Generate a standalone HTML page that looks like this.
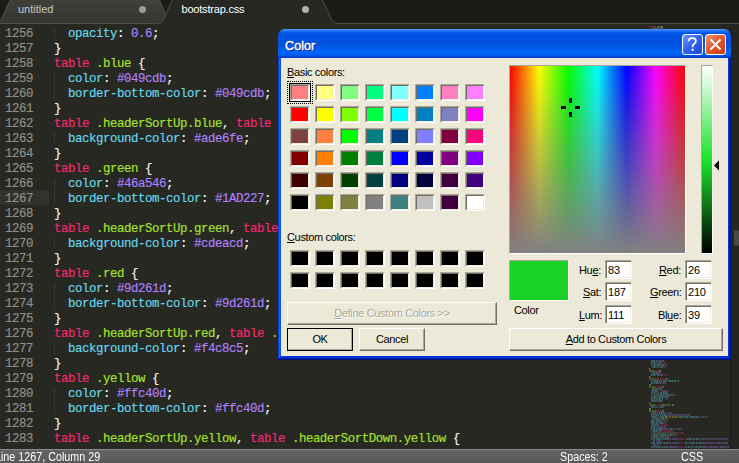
<!DOCTYPE html>
<html><head><meta charset="utf-8">
<style>
*{margin:0;padding:0;box-sizing:border-box}
html,body{width:739px;height:463px;overflow:hidden}
body{position:relative;background:#272822;font-family:"Liberation Sans",sans-serif}
.abs{position:absolute}
#tabbar{position:absolute;left:0;top:0;width:739px;height:24px}
.ln,.gn{position:absolute;height:15px;line-height:15px;font-family:"Liberation Mono",monospace;font-size:12.4px;letter-spacing:-0.44px;white-space:pre;color:#F8F8F2;-webkit-text-stroke:0.15px currentColor}
.ln{left:54px}
.gn{left:0;width:33px;text-align:right;color:#8F908A}
.k{color:#F92672}.c{color:#A6E22E}.p{color:#66D9EF}.v{color:#AE81FF}
.guide{position:absolute;left:54px;width:1px;background:repeating-linear-gradient(180deg,#4a4a44 0 1px,transparent 1px 2px)}
#curline{position:absolute;left:0;top:190px;width:49px;height:15px;background:#32332d}
#status{position:absolute;left:0;top:449px;width:739px;height:14px;background:linear-gradient(180deg,#636363,#595959);border-top:1px solid #8a8a8a;color:#ffffff;font-size:12.5px}
#status span{position:absolute;top:1px;line-height:13px;transform:scaleX(0.86);transform-origin:0 0}
#vscroll{position:absolute;left:730px;top:24px;width:9px;height:425px;background:#242420;border-left:1px dotted #121210}
#thumb{position:absolute;left:734px;top:230px;width:5px;height:16px;background:#4a4a46;border-radius:2px}

/* dialog */
#dlg{position:absolute;left:278px;top:29px;width:453px;height:29px;border-radius:7px 7px 0 0;
 background:linear-gradient(180deg,#4a9bff 0px,#1e6ff5 2px,#0056e8 4px,#0050dc 12px,#0055e2 17px,#0062f6 22px,#0064fa 25px,#0050e0 27px,#0036b8 29px);}
#frame{position:absolute;left:278px;top:58px;width:453px;height:302px;background:#0831d9;
 box-shadow:inset -1px -1px #00138c, inset 1px 0 #0831d9, inset -2px -2px #001ea0, inset 2px 0 #166aee, inset -3px -3px #003bda, inset 3px 0 #0855dd}
#client{position:absolute;left:281px;top:58px;width:447px;height:298px;background:#ECE9D8}
#title{position:absolute;left:285px;top:38px;color:#fff;font-weight:normal;-webkit-text-stroke:0.45px #fff;font-size:12.5px;letter-spacing:0.1px;line-height:16px;text-shadow:1px 1px #0f1089}
.tbtn{position:absolute;top:34px;width:21px;height:21px;border:1px solid #fff;border-radius:3px}
#help{left:682px;background:linear-gradient(135deg,#6a95fa,#3467ec 45%,#2355e4 75%,#1e4cd8)}
#close{left:705px;background:linear-gradient(135deg,#f09070,#e45a30 45%,#d8481e 75%,#c83c16)}
.lbl{position:absolute;font-size:11px;line-height:13px;color:#000;white-space:nowrap;letter-spacing:-0.35px}
.u{text-decoration:underline;text-underline-offset:1px}
.sw{position:absolute;width:20px;height:17px;border:1px solid;border-color:#ACA899 #fff #fff #ACA899}
.sw div{width:18px;height:15px;border:1px solid;border-color:#716F64 #F1EFE2 #F1EFE2 #716F64}
.btn{position:absolute;height:23px;background:#ECE9D8;border:1px solid;border-color:#fff #716F64 #716F64 #fff;box-shadow:inset -1px -1px #ACA899;font-size:11px;text-align:center;line-height:21px;color:#000;letter-spacing:-0.35px}
.edit{position:absolute;width:27px;height:19px;background:#fff;border:1px solid;border-color:#ACA899 #fff #fff #ACA899;box-shadow:inset 1px 1px #716F64, inset -1px -1px #F1EFE2;font-size:11px;line-height:15px;padding-left:2px;padding-top:2px;letter-spacing:-0.2px}
#spec{position:absolute;left:509px;top:65px;width:177px;height:189px;border:1px solid;border-color:#ACA899 #fff #fff #ACA899;
 background:linear-gradient(180deg,rgba(128,128,128,0) 0%,rgba(128,128,128,1) 100%),linear-gradient(90deg,#f00 0%,#ff0 16.67%,#0f0 33.33%,#0ff 50%,#00f 66.67%,#f0f 83.33%,#f00 100%);background-clip:padding-box}
#lum{position:absolute;left:701px;top:65px;width:12px;height:189px;border:1px solid;border-color:#ACA899 #fff #fff #ACA899;
 background:linear-gradient(180deg,#fff 0%,#1CE32B 50%,#000 100%);background-clip:padding-box}
#cur{position:absolute;left:509px;top:260px;width:60px;height:41px;background:#1AD227;border:1px solid;border-color:#ACA899 #fff #fff #ACA899}
</style></head><body>
<div id="tabbar">
<svg width="739" height="24" style="position:absolute;left:0;top:0">
 <defs><linearGradient id="itab" x1="0" y1="0" x2="0" y2="1"><stop offset="0" stop-color="#41413c"/><stop offset="1" stop-color="#353531"/></linearGradient></defs>
 <rect x="0" y="0" width="739" height="24" fill="#1a1a17"/>
 <rect x="0" y="23" width="739" height="1" fill="#43433e"/>
 <path d="M-8 23.5 Q0 23.5 2.5 17 L10.5 -1 L159 -1 L165 12.5 Q167.5 18 163.5 21.5 Q161.5 23.5 157 23.5 Z" fill="url(#itab)" stroke="#51514b" stroke-width="1"/>
 <path d="M140 24.5 L157 23.5 Q161.5 23.5 163.5 20 L172.5 -1 L322 -1 L329 14 Q332.5 23.5 338 23.5 L739 23.5 L739 24.5 Z" fill="#272822" stroke="#4c4c46" stroke-width="1"/>
 <rect x="0" y="24" width="739" height="1" fill="#272822"/>
 <circle cx="142.5" cy="9.5" r="3.5" fill="#9a9a96"/>
 <circle cx="305.5" cy="9.5" r="3.5" fill="#b0b0ac"/>
 <text x="18" y="13" font-family="Liberation Sans" font-size="11" fill="#c8c8c4">untitled</text>
 <text x="181.5" y="13" font-family="Liberation Sans" font-size="11" letter-spacing="-0.2" fill="#ffffff">bootstrap.css</text>
</svg>
</div>
<div id="curline"></div>
<div class="guide" style="top:29px;height:10px"></div><div class="guide" style="top:73px;height:26px"></div><div class="guide" style="top:133px;height:11px"></div><div class="guide" style="top:179px;height:25px"></div><div class="guide" style="top:239px;height:10px"></div><div class="guide" style="top:283px;height:26px"></div><div class="guide" style="top:343px;height:11px"></div><div class="guide" style="top:389px;height:25px"></div>
<div class="gn" style="top:27px">1256</div>
<div class="gn" style="top:42px">1257</div>
<div class="gn" style="top:57px">1258</div>
<div class="gn" style="top:72px">1259</div>
<div class="gn" style="top:87px">1260</div>
<div class="gn" style="top:102px">1261</div>
<div class="gn" style="top:117px">1262</div>
<div class="gn" style="top:132px">1263</div>
<div class="gn" style="top:147px">1264</div>
<div class="gn" style="top:162px">1265</div>
<div class="gn" style="top:177px">1266</div>
<div class="gn" style="top:192px">1267</div>
<div class="gn" style="top:207px">1268</div>
<div class="gn" style="top:222px">1269</div>
<div class="gn" style="top:237px">1270</div>
<div class="gn" style="top:252px">1271</div>
<div class="gn" style="top:267px">1272</div>
<div class="gn" style="top:282px">1273</div>
<div class="gn" style="top:297px">1274</div>
<div class="gn" style="top:312px">1275</div>
<div class="gn" style="top:327px">1276</div>
<div class="gn" style="top:342px">1277</div>
<div class="gn" style="top:357px">1278</div>
<div class="gn" style="top:372px">1279</div>
<div class="gn" style="top:387px">1280</div>
<div class="gn" style="top:402px">1281</div>
<div class="gn" style="top:417px">1282</div>
<div class="gn" style="top:432px">1283</div>
<div class="ln" style="top:27px">  <span class="p">opacity</span>: <span class="v">0.6</span>;</div>
<div class="ln" style="top:42px">}</div>
<div class="ln" style="top:57px"><span class="k">table</span> <span class="c">.blue</span> {</div>
<div class="ln" style="top:72px">  <span class="p">color</span>: <span class="v">#049cdb</span>;</div>
<div class="ln" style="top:87px">  <span class="p">border-bottom-color</span>: <span class="v">#049cdb</span>;</div>
<div class="ln" style="top:102px">}</div>
<div class="ln" style="top:117px"><span class="k">table</span> <span class="c">.headerSortUp.blue</span>, <span class="k">table</span> <span class="c">.headerSortDown.blue</span> {</div>
<div class="ln" style="top:132px">  <span class="p">background-color</span>: <span class="v">#ade6fe</span>;</div>
<div class="ln" style="top:147px">}</div>
<div class="ln" style="top:162px"><span class="k">table</span> <span class="c">.green</span> {</div>
<div class="ln" style="top:177px">  <span class="p">color</span>: <span class="v">#46a546</span>;</div>
<div class="ln" style="top:192px">  <span class="p">border-bottom-color</span>: <span class="v">#1AD227</span>;</div>
<div class="ln" style="top:207px">}</div>
<div class="ln" style="top:222px"><span class="k">table</span> <span class="c">.headerSortUp.green</span>, <span class="k">table</span> <span class="c">.headerSortDown.green</span> {</div>
<div class="ln" style="top:237px">  <span class="p">background-color</span>: <span class="v">#cdeacd</span>;</div>
<div class="ln" style="top:252px">}</div>
<div class="ln" style="top:267px"><span class="k">table</span> <span class="c">.red</span> {</div>
<div class="ln" style="top:282px">  <span class="p">color</span>: <span class="v">#9d261d</span>;</div>
<div class="ln" style="top:297px">  <span class="p">border-bottom-color</span>: <span class="v">#9d261d</span>;</div>
<div class="ln" style="top:312px">}</div>
<div class="ln" style="top:327px"><span class="k">table</span> <span class="c">.headerSortUp.red</span>, <span class="k">table</span> <span class="c">.headerSortDown.red</span> {</div>
<div class="ln" style="top:342px">  <span class="p">background-color</span>: <span class="v">#f4c8c5</span>;</div>
<div class="ln" style="top:357px">}</div>
<div class="ln" style="top:372px"><span class="k">table</span> <span class="c">.yellow</span> {</div>
<div class="ln" style="top:387px">  <span class="p">color</span>: <span class="v">#ffc40d</span>;</div>
<div class="ln" style="top:402px">  <span class="p">border-bottom-color</span>: <span class="v">#ffc40d</span>;</div>
<div class="ln" style="top:417px">}</div>
<div class="ln" style="top:432px"><span class="k">table</span> <span class="c">.headerSortUp.yellow</span>, <span class="k">table</span> <span class="c">.headerSortDown.yellow</span> {</div>
<svg class="abs" style="left:0;top:0;opacity:0.45" width="739" height="463"><line x1="649" y1="27" x2="655" y2="27" stroke="#F92672" stroke-width="1.3" stroke-dasharray="1.6 0.5 2.0 0.3 0.8 0.3 1.6 0.3" stroke-dashoffset="1.8"/><line x1="655" y1="27" x2="662" y2="27" stroke="#A6E22E" stroke-width="1.3" stroke-dasharray="1.2 0.3 0.8 1.0 2.0 0.3 1.2 0.3" stroke-dashoffset="1.1"/><line x1="661" y1="27" x2="663" y2="27" stroke="#F8F8F2" stroke-width="1.3" stroke-dasharray="0.8 0.3 1.2 0.3 2.4 1.0 0.8 0.5" stroke-dashoffset="0.1"/><line x1="651" y1="29" x2="658" y2="29" stroke="#66D9EF" stroke-width="1.3" stroke-dasharray="1.2 0.7 2.0 0.5 2.4 0.3 2.4 0.7" stroke-dashoffset="1.1"/><line x1="658" y1="29" x2="663" y2="29" stroke="#AE81FF" stroke-width="1.3" stroke-dasharray="1.2 0.3 2.4 0.5 1.6 0.3 2.4 0.3" stroke-dashoffset="1.1"/><line x1="651" y1="361" x2="657" y2="361" stroke="#66D9EF" stroke-width="1.3" stroke-dasharray="2.4 0.5 2.0 1.0 1.6 1.0 2.4 1.0" stroke-dashoffset="0.7"/><line x1="657" y1="361" x2="665" y2="361" stroke="#AE81FF" stroke-width="1.3" stroke-dasharray="1.2 0.5 1.2 0.3 2.4 0.7 2.4 1.0" stroke-dashoffset="1.8"/><line x1="651" y1="363" x2="661" y2="363" stroke="#66D9EF" stroke-width="1.3" stroke-dasharray="2.0 0.7 2.4 0.3 0.8 1.0 1.2 0.7" stroke-dashoffset="0.3"/><line x1="661" y1="363" x2="666" y2="363" stroke="#F92672" stroke-width="1.3" stroke-dasharray="2.0 1.0 0.8 0.3 2.4 0.7 1.6 0.7" stroke-dashoffset="1.2"/><line x1="651" y1="365" x2="663" y2="365" stroke="#66D9EF" stroke-width="1.3" stroke-dasharray="2.4 1.0 0.8 0.3 1.6 1.0 0.8 0.3" stroke-dashoffset="1.5"/><line x1="663" y1="365" x2="667" y2="365" stroke="#AE81FF" stroke-width="1.3" stroke-dasharray="1.6 1.0 1.6 1.0 1.6 0.3 2.0 0.7" stroke-dashoffset="0.3"/><line x1="651" y1="367" x2="663" y2="367" stroke="#66D9EF" stroke-width="1.3" stroke-dasharray="0.8 1.0 0.8 0.5 1.6 0.5 1.2 1.0" stroke-dashoffset="0.8"/><line x1="663" y1="367" x2="666" y2="367" stroke="#AE81FF" stroke-width="1.3" stroke-dasharray="2.0 0.3 1.2 1.0 2.0 0.7 1.2 1.0" stroke-dashoffset="1.7"/><line x1="649" y1="369" x2="651" y2="369" stroke="#F8F8F2" stroke-width="1.3" stroke-dasharray="1.6 1.0 1.6 1.0 1.2 0.5 0.8 0.5" stroke-dashoffset="0.3"/><line x1="649" y1="371" x2="656" y2="371" stroke="#A6E22E" stroke-width="1.3" stroke-dasharray="1.2 0.3 2.0 0.5 1.6 0.7 0.8 0.5" stroke-dashoffset="0.8"/><line x1="656" y1="371" x2="659" y2="371" stroke="#F92672" stroke-width="1.3" stroke-dasharray="1.6 0.7 1.2 0.3 2.0 1.0 2.0 1.0" stroke-dashoffset="0.8"/><line x1="659" y1="371" x2="661" y2="371" stroke="#F8F8F2" stroke-width="1.3" stroke-dasharray="2.0 1.0 0.8 0.5 0.8 0.5 2.0 0.5" stroke-dashoffset="0.2"/><line x1="651" y1="373" x2="658" y2="373" stroke="#66D9EF" stroke-width="1.3" stroke-dasharray="2.4 0.3 0.8 0.3 2.4 0.5 2.4 0.3" stroke-dashoffset="1.9"/><line x1="658" y1="373" x2="661" y2="373" stroke="#AE81FF" stroke-width="1.3" stroke-dasharray="2.4 0.3 0.8 0.5 2.4 1.0 1.2 0.7" stroke-dashoffset="1.9"/><line x1="651" y1="375" x2="663" y2="375" stroke="#66D9EF" stroke-width="1.3" stroke-dasharray="2.4 0.7 2.0 0.3 0.8 1.0 2.0 1.0" stroke-dashoffset="1.0"/><line x1="663" y1="375" x2="668" y2="375" stroke="#F92672" stroke-width="1.3" stroke-dasharray="0.8 0.5 0.8 0.7 1.6 1.0 1.2 0.3" stroke-dashoffset="0.4"/><line x1="649" y1="377" x2="651" y2="377" stroke="#F8F8F2" stroke-width="1.3" stroke-dasharray="2.4 0.7 1.2 0.3 2.4 0.7 0.8 0.7" stroke-dashoffset="1.0"/><line x1="649" y1="379" x2="656" y2="379" stroke="#A6E22E" stroke-width="1.3" stroke-dasharray="1.2 0.7 1.2 0.7 1.2 0.5 1.2 1.0" stroke-dashoffset="1.5"/><line x1="656" y1="379" x2="666" y2="379" stroke="#F92672" stroke-width="1.3" stroke-dasharray="1.2 0.5 2.4 1.0 1.6 0.3 0.8 0.7" stroke-dashoffset="0.9"/><line x1="666" y1="379" x2="668" y2="379" stroke="#F8F8F2" stroke-width="1.3" stroke-dasharray="1.2 0.7 2.0 0.7 1.6 0.3 1.2 0.3" stroke-dashoffset="0.5"/><line x1="651" y1="381" x2="667" y2="381" stroke="#66D9EF" stroke-width="1.3" stroke-dasharray="1.2 0.7 1.2 1.0 2.4 0.3 2.0 0.7" stroke-dashoffset="1.6"/><line x1="668" y1="381" x2="679" y2="381" stroke="#66D9EF" stroke-width="1.3" stroke-dasharray="0.8 0.3 2.0 0.5 2.0 0.5 2.0 0.7" stroke-dashoffset="0.2"/><line x1="651" y1="383" x2="657" y2="383" stroke="#66D9EF" stroke-width="1.3" stroke-dasharray="2.0 1.0 2.0 0.3 1.2 0.5 1.2 0.3" stroke-dashoffset="0.3"/><line x1="657" y1="383" x2="666" y2="383" stroke="#AE81FF" stroke-width="1.3" stroke-dasharray="2.0 0.5 2.4 1.0 1.6 0.5 2.4 0.5" stroke-dashoffset="0.0"/><line x1="649" y1="385" x2="651" y2="385" stroke="#F8F8F2" stroke-width="1.3" stroke-dasharray="0.8 0.5 2.0 0.5 1.2 0.3 1.6 0.5" stroke-dashoffset="0.6"/><line x1="649" y1="387" x2="656" y2="387" stroke="#A6E22E" stroke-width="1.3" stroke-dasharray="1.2 0.7 1.6 1.0 1.2 0.3 1.6 1.0" stroke-dashoffset="1.3"/><line x1="656" y1="387" x2="662" y2="387" stroke="#F92672" stroke-width="1.3" stroke-dasharray="2.4 1.0 2.4 0.5 2.4 0.5 2.4 0.3" stroke-dashoffset="1.7"/><line x1="662" y1="387" x2="664" y2="387" stroke="#F8F8F2" stroke-width="1.3" stroke-dasharray="1.2 0.3 1.2 0.5 1.2 1.0 2.4 0.3" stroke-dashoffset="1.1"/><line x1="651" y1="389" x2="657" y2="389" stroke="#66D9EF" stroke-width="1.3" stroke-dasharray="1.6 1.0 0.8 0.3 1.2 0.5 1.6 0.3" stroke-dashoffset="1.5"/><line x1="657" y1="389" x2="662" y2="389" stroke="#66D9EF" stroke-width="1.3" stroke-dasharray="2.4 1.0 2.4 0.3 0.8 1.0 1.6 0.5" stroke-dashoffset="1.4"/><line x1="651" y1="391" x2="658" y2="391" stroke="#66D9EF" stroke-width="1.3" stroke-dasharray="2.0 1.0 2.4 0.5 2.4 0.7 2.4 0.5" stroke-dashoffset="1.7"/><line x1="658" y1="391" x2="662" y2="391" stroke="#F92672" stroke-width="1.3" stroke-dasharray="1.2 1.0 0.8 1.0 2.0 0.7 0.8 0.5" stroke-dashoffset="0.9"/><line x1="662" y1="391" x2="668" y2="391" stroke="#AE81FF" stroke-width="1.3" stroke-dasharray="1.2 0.7 0.8 0.5 1.6 0.5 1.6 0.5" stroke-dashoffset="1.9"/><line x1="651" y1="393" x2="659" y2="393" stroke="#66D9EF" stroke-width="1.3" stroke-dasharray="1.2 0.3 2.0 1.0 1.2 0.5 1.2 1.0" stroke-dashoffset="2.0"/><line x1="660" y1="393" x2="668" y2="393" stroke="#66D9EF" stroke-width="1.3" stroke-dasharray="2.0 0.7 2.0 0.5 1.6 0.7 0.8 0.7" stroke-dashoffset="0.0"/><line x1="651" y1="395" x2="658" y2="395" stroke="#8a8a70" stroke-width="1.3" stroke-dasharray="2.4 1.0 2.0 0.3 2.0 0.7 2.4 0.7" stroke-dashoffset="1.0"/><line x1="658" y1="395" x2="673" y2="395" stroke="#66D9EF" stroke-width="1.3" stroke-dasharray="0.8 0.3 1.2 0.3 0.8 0.7 1.6 0.3" stroke-dashoffset="1.8"/><line x1="673" y1="395" x2="676" y2="395" stroke="#AE81FF" stroke-width="1.3" stroke-dasharray="1.2 0.7 1.2 1.0 1.6 1.0 1.2 1.0" stroke-dashoffset="1.4"/><line x1="651" y1="397" x2="666" y2="397" stroke="#66D9EF" stroke-width="1.3" stroke-dasharray="0.8 0.7 0.8 0.5 2.0 0.3 1.6 0.3" stroke-dashoffset="1.3"/><line x1="666" y1="397" x2="669" y2="397" stroke="#AE81FF" stroke-width="1.3" stroke-dasharray="1.6 0.3 2.4 0.5 0.8 0.7 0.8 1.0" stroke-dashoffset="0.0"/><line x1="651" y1="399" x2="663" y2="399" stroke="#66D9EF" stroke-width="1.3" stroke-dasharray="2.4 1.0 1.6 0.5 0.8 0.5 0.8 0.5" stroke-dashoffset="0.5"/><line x1="665" y1="399" x2="667" y2="399" stroke="#AE81FF" stroke-width="1.3" stroke-dasharray="1.2 0.5 1.6 0.7 2.4 0.5 1.6 1.0" stroke-dashoffset="1.0"/><line x1="651" y1="401" x2="661" y2="401" stroke="#66D9EF" stroke-width="1.3" stroke-dasharray="1.2 0.7 1.6 0.3 1.6 0.3 0.8 0.3" stroke-dashoffset="1.5"/><line x1="661" y1="401" x2="663" y2="401" stroke="#AE81FF" stroke-width="1.3" stroke-dasharray="2.4 0.5 2.4 1.0 1.2 1.0 0.8 1.0" stroke-dashoffset="1.3"/><line x1="649" y1="403" x2="651" y2="403" stroke="#F8F8F2" stroke-width="1.3" stroke-dasharray="2.4 1.0 2.4 0.7 1.2 0.5 1.6 0.5" stroke-dashoffset="1.7"/><line x1="649" y1="405" x2="656" y2="405" stroke="#A6E22E" stroke-width="1.3" stroke-dasharray="1.2 1.0 1.6 0.3 1.2 0.3 0.8 0.7" stroke-dashoffset="0.9"/><line x1="657" y1="405" x2="661" y2="405" stroke="#F92672" stroke-width="1.3" stroke-dasharray="0.8 0.3 2.0 0.7 2.4 0.5 1.6 0.3" stroke-dashoffset="0.9"/><line x1="661" y1="405" x2="671" y2="405" stroke="#A6E22E" stroke-width="1.3" stroke-dasharray="1.2 0.7 2.0 0.3 1.6 0.7 1.6 0.7" stroke-dashoffset="0.5"/><line x1="672" y1="405" x2="674" y2="405" stroke="#F8F8F2" stroke-width="1.3" stroke-dasharray="1.6 0.5 1.6 0.5 0.8 0.7 2.0 0.3" stroke-dashoffset="0.9"/><line x1="651" y1="407" x2="657" y2="407" stroke="#66D9EF" stroke-width="1.3" stroke-dasharray="2.4 0.5 1.2 0.3 0.8 0.7 0.8 0.5" stroke-dashoffset="0.8"/><line x1="658" y1="407" x2="664" y2="407" stroke="#66D9EF" stroke-width="1.3" stroke-dasharray="0.8 1.0 0.8 0.7 1.6 0.5 0.8 0.5" stroke-dashoffset="1.3"/><line x1="649" y1="409" x2="651" y2="409" stroke="#F8F8F2" stroke-width="1.3" stroke-dasharray="2.4 1.0 1.6 1.0 1.2 0.7 2.4 0.5" stroke-dashoffset="0.1"/><line x1="649" y1="411" x2="656" y2="411" stroke="#A6E22E" stroke-width="1.3" stroke-dasharray="2.4 1.0 2.4 0.5 2.4 0.3 2.4 0.5" stroke-dashoffset="0.2"/><line x1="656" y1="411" x2="662" y2="411" stroke="#F92672" stroke-width="1.3" stroke-dasharray="0.8 0.5 1.6 0.3 2.0 1.0 2.4 0.3" stroke-dashoffset="1.3"/><line x1="662" y1="411" x2="664" y2="411" stroke="#F8F8F2" stroke-width="1.3" stroke-dasharray="2.4 0.5 2.0 0.7 0.8 1.0 0.8 0.3" stroke-dashoffset="1.3"/><line x1="651" y1="413" x2="667" y2="413" stroke="#66D9EF" stroke-width="1.3" stroke-dasharray="0.8 1.0 1.6 0.3 1.6 0.5 1.2 0.5" stroke-dashoffset="1.5"/><line x1="668" y1="413" x2="672" y2="413" stroke="#AE81FF" stroke-width="1.3" stroke-dasharray="2.0 1.0 2.0 0.3 2.0 0.7 0.8 0.5" stroke-dashoffset="0.2"/><line x1="651" y1="415" x2="669" y2="415" stroke="#66D9EF" stroke-width="1.3" stroke-dasharray="1.2 0.7 1.6 0.7 2.4 0.5 0.8 1.0" stroke-dashoffset="0.1"/><line x1="669" y1="415" x2="691" y2="415" stroke="#AE81FF" stroke-width="1.3" stroke-dasharray="1.6 0.3 1.2 1.0 1.6 0.7 2.0 1.0" stroke-dashoffset="0.9"/><line x1="651" y1="417" x2="666" y2="417" stroke="#66D9EF" stroke-width="1.3" stroke-dasharray="0.8 0.5 1.6 0.3 2.0 0.3 1.6 1.0" stroke-dashoffset="0.2"/><line x1="666" y1="417" x2="681" y2="417" stroke="#E6DB74" stroke-width="1.3" stroke-dasharray="2.4 1.0 1.6 1.0 1.2 0.5 0.8 0.3" stroke-dashoffset="0.3"/><line x1="681" y1="417" x2="697" y2="417" stroke="#66D9EF" stroke-width="1.3" stroke-dasharray="2.4 0.7 1.6 0.5 2.4 0.7 0.8 0.7" stroke-dashoffset="0.5"/><line x1="697" y1="417" x2="707" y2="417" stroke="#AE81FF" stroke-width="1.3" stroke-dasharray="2.0 1.0 0.8 0.5 0.8 1.0 2.0 1.0" stroke-dashoffset="0.6"/><line x1="651" y1="419" x2="663" y2="419" stroke="#66D9EF" stroke-width="1.3" stroke-dasharray="1.2 1.0 1.6 1.0 1.6 0.3 1.6 0.3" stroke-dashoffset="0.6"/><line x1="663" y1="419" x2="668" y2="419" stroke="#66D9EF" stroke-width="1.3" stroke-dasharray="1.6 1.0 0.8 0.5 0.8 0.7 1.6 0.7" stroke-dashoffset="0.1"/><line x1="651" y1="421" x2="662" y2="421" stroke="#66D9EF" stroke-width="1.3" stroke-dasharray="2.0 0.3 1.6 1.0 1.6 0.3 1.6 0.3" stroke-dashoffset="0.1"/><line x1="662" y1="421" x2="668" y2="421" stroke="#F92672" stroke-width="1.3" stroke-dasharray="1.6 0.5 1.2 0.7 2.0 0.7 1.2 0.7" stroke-dashoffset="1.6"/><line x1="651" y1="423" x2="664" y2="423" stroke="#66D9EF" stroke-width="1.3" stroke-dasharray="2.0 0.3 2.0 0.5 0.8 0.3 2.0 1.0" stroke-dashoffset="1.2"/><line x1="664" y1="423" x2="666" y2="423" stroke="#AE81FF" stroke-width="1.3" stroke-dasharray="1.2 0.7 2.0 0.3 2.4 0.5 1.2 1.0" stroke-dashoffset="0.8"/><line x1="651" y1="425" x2="660" y2="425" stroke="#66D9EF" stroke-width="1.3" stroke-dasharray="1.6 0.7 1.6 0.7 2.0 0.5 1.6 1.0" stroke-dashoffset="1.1"/><line x1="661" y1="425" x2="669" y2="425" stroke="#F92672" stroke-width="1.3" stroke-dasharray="2.0 0.3 1.2 0.5 0.8 0.5 2.4 1.0" stroke-dashoffset="1.1"/><line x1="651" y1="427" x2="658" y2="427" stroke="#66D9EF" stroke-width="1.3" stroke-dasharray="2.0 0.7 2.0 1.0 1.2 0.5 1.2 0.3" stroke-dashoffset="0.3"/><line x1="658" y1="427" x2="666" y2="427" stroke="#AE81FF" stroke-width="1.3" stroke-dasharray="2.4 0.3 1.6 0.5 1.6 0.7 2.4 0.5" stroke-dashoffset="1.8"/><line x1="651" y1="429" x2="662" y2="429" stroke="#66D9EF" stroke-width="1.3" stroke-dasharray="2.0 1.0 2.0 0.5 2.0 0.7 1.6 0.3" stroke-dashoffset="1.0"/><line x1="662" y1="429" x2="682" y2="429" stroke="#AE81FF" stroke-width="1.3" stroke-dasharray="2.4 0.7 1.2 0.5 0.8 0.7 1.2 1.0" stroke-dashoffset="0.8"/><line x1="651" y1="431" x2="662" y2="431" stroke="#66D9EF" stroke-width="1.3" stroke-dasharray="2.0 1.0 1.6 0.3 1.2 0.3 2.0 1.0" stroke-dashoffset="1.9"/><line x1="662" y1="431" x2="674" y2="431" stroke="#F92672" stroke-width="1.3" stroke-dasharray="2.0 0.3 0.8 1.0 2.4 1.0 2.0 0.5" stroke-dashoffset="1.6"/><line x1="651" y1="433" x2="678" y2="433" stroke="#8a8a70" stroke-width="1.3" stroke-dasharray="1.2 0.5 1.2 0.3 2.0 0.3 2.4 0.3" stroke-dashoffset="0.0"/><line x1="679" y1="433" x2="684" y2="433" stroke="#F92672" stroke-width="1.3" stroke-dasharray="1.2 0.5 2.4 0.3 1.6 0.5 1.6 1.0" stroke-dashoffset="1.4"/><line x1="651" y1="435" x2="674" y2="435" stroke="#66D9EF" stroke-width="1.3" stroke-dasharray="0.8 0.3 0.8 0.7 2.4 0.5 2.0 0.7" stroke-dashoffset="0.4"/><line x1="675" y1="435" x2="678" y2="435" stroke="#F92672" stroke-width="1.3" stroke-dasharray="2.4 0.3 0.8 0.7 2.0 0.7 1.6 0.5" stroke-dashoffset="1.0"/><line x1="651" y1="437" x2="668" y2="437" stroke="#66D9EF" stroke-width="1.3" stroke-dasharray="1.2 0.5 0.8 1.0 1.6 0.3 0.8 0.5" stroke-dashoffset="1.0"/><line x1="668" y1="437" x2="670" y2="437" stroke="#F92672" stroke-width="1.3" stroke-dasharray="2.0 0.3 1.6 0.5 2.0 0.7 1.2 1.0" stroke-dashoffset="0.1"/><line x1="651" y1="439" x2="670" y2="439" stroke="#66D9EF" stroke-width="1.3" stroke-dasharray="1.6 1.0 1.6 1.0 1.2 0.3 1.6 0.3" stroke-dashoffset="0.4"/><line x1="670" y1="439" x2="679" y2="439" stroke="#AE81FF" stroke-width="1.3" stroke-dasharray="1.2 0.7 1.2 0.5 2.0 0.5 1.6 0.7" stroke-dashoffset="0.2"/><line x1="679" y1="439" x2="685" y2="439" stroke="#F92672" stroke-width="1.3" stroke-dasharray="2.4 1.0 2.4 0.5 1.2 1.0 2.0 0.3" stroke-dashoffset="1.9"/><line x1="685" y1="439" x2="701" y2="439" stroke="#66D9EF" stroke-width="1.3" stroke-dasharray="1.2 1.0 0.8 0.5 0.8 0.5 2.0 0.3" stroke-dashoffset="1.4"/><line x1="701" y1="439" x2="728" y2="439" stroke="#AE81FF" stroke-width="1.3" stroke-dasharray="1.2 1.0 2.0 0.7 0.8 0.3 1.2 0.7" stroke-dashoffset="0.4"/><line x1="653" y1="441" x2="661" y2="441" stroke="#AE81FF" stroke-width="1.3" stroke-dasharray="2.4 1.0 0.8 0.7 2.0 0.7 1.6 1.0" stroke-dashoffset="0.3"/><line x1="651" y1="443" x2="670" y2="443" stroke="#66D9EF" stroke-width="1.3" stroke-dasharray="0.8 0.3 1.6 0.3 1.6 1.0 0.8 0.5" stroke-dashoffset="0.8"/><line x1="670" y1="443" x2="679" y2="443" stroke="#AE81FF" stroke-width="1.3" stroke-dasharray="1.6 1.0 0.8 0.3 2.0 0.5 1.6 1.0" stroke-dashoffset="0.4"/><line x1="679" y1="443" x2="685" y2="443" stroke="#F92672" stroke-width="1.3" stroke-dasharray="1.6 1.0 0.8 1.0 1.2 1.0 0.8 1.0" stroke-dashoffset="0.1"/><line x1="685" y1="443" x2="701" y2="443" stroke="#66D9EF" stroke-width="1.3" stroke-dasharray="0.8 0.3 1.6 0.5 0.8 0.7 1.6 0.7" stroke-dashoffset="0.7"/><line x1="701" y1="443" x2="728" y2="443" stroke="#AE81FF" stroke-width="1.3" stroke-dasharray="2.4 0.3 1.6 0.7 1.6 0.7 0.8 0.3" stroke-dashoffset="0.0"/><line x1="653" y1="445" x2="659" y2="445" stroke="#AE81FF" stroke-width="1.3" stroke-dasharray="1.2 0.3 2.0 1.0 2.0 0.7 2.0 1.0" stroke-dashoffset="0.3"/><line x1="651" y1="447" x2="670" y2="447" stroke="#66D9EF" stroke-width="1.3" stroke-dasharray="2.0 0.5 0.8 0.7 1.2 0.5 1.6 0.7" stroke-dashoffset="0.9"/><line x1="670" y1="447" x2="679" y2="447" stroke="#AE81FF" stroke-width="1.3" stroke-dasharray="2.4 0.3 2.4 0.5 2.0 0.5 1.2 1.0" stroke-dashoffset="0.1"/><line x1="679" y1="447" x2="685" y2="447" stroke="#F92672" stroke-width="1.3" stroke-dasharray="0.8 1.0 2.4 0.7 1.2 1.0 0.8 0.3" stroke-dashoffset="0.5"/><line x1="685" y1="447" x2="701" y2="447" stroke="#66D9EF" stroke-width="1.3" stroke-dasharray="0.8 0.5 0.8 1.0 2.0 1.0 1.2 0.5" stroke-dashoffset="0.3"/><line x1="701" y1="447" x2="729" y2="447" stroke="#AE81FF" stroke-width="1.3" stroke-dasharray="2.0 0.5 2.4 0.3 1.6 0.7 1.6 0.7" stroke-dashoffset="0.7"/></svg>
<div id="vscroll"></div>
<div id="thumb"></div>
<div id="status"><span style="left:-5px">Line 1267, Column 29</span><span style="left:560px">Spaces: 2</span><span style="left:681px">CSS</span></div>

<div id="frame"></div>
<div id="dlg"></div>
<div id="client"></div>
<div id="title">Color</div>
<div class="tbtn" id="help"><svg width="19" height="19" style="position:absolute;left:0;top:0"><path d="M5.6 6.2 Q5.6 3.1 9.3 3.1 Q12.9 3.1 12.9 6.1 Q12.9 7.9 10.9 9 Q9.6 9.7 9.6 11.2 L9.6 12.2" stroke="#fff" stroke-width="1.8" fill="none"/><rect x="8.6" y="13.8" width="2" height="2" fill="#fff"/></svg></div>
<div class="tbtn" id="close"><svg width="19" height="19" style="position:absolute;left:0;top:0"><path d="M4.5 4.5 L14.5 14.5 M14.5 4.5 L4.5 14.5" stroke="#fff" stroke-width="1.9" fill="none"/></svg></div>

<div class="lbl" style="left:287px;top:66px"><span class="u">B</span>asic colors:</div>
<div class="abs" style="left:287px;top:81px;width:26px;height:23px;border:1px dotted #000"></div>
<div class="abs" style="left:289px;top:83px;width:22px;height:19px;border:1px solid #000"></div>
<div class="sw" style="left:290px;top:84px"><div style="background:#FF8080"></div></div>
<div class="sw" style="left:315px;top:84px"><div style="background:#FFFF80"></div></div>
<div class="sw" style="left:340px;top:84px"><div style="background:#80FF80"></div></div>
<div class="sw" style="left:365px;top:84px"><div style="background:#00FF80"></div></div>
<div class="sw" style="left:390px;top:84px"><div style="background:#80FFFF"></div></div>
<div class="sw" style="left:415px;top:84px"><div style="background:#0080FF"></div></div>
<div class="sw" style="left:440px;top:84px"><div style="background:#FF80C0"></div></div>
<div class="sw" style="left:465px;top:84px"><div style="background:#FF80FF"></div></div>
<div class="sw" style="left:290px;top:106px"><div style="background:#FF0000"></div></div>
<div class="sw" style="left:315px;top:106px"><div style="background:#FFFF00"></div></div>
<div class="sw" style="left:340px;top:106px"><div style="background:#80FF00"></div></div>
<div class="sw" style="left:365px;top:106px"><div style="background:#00FF40"></div></div>
<div class="sw" style="left:390px;top:106px"><div style="background:#00FFFF"></div></div>
<div class="sw" style="left:415px;top:106px"><div style="background:#0080C0"></div></div>
<div class="sw" style="left:440px;top:106px"><div style="background:#8080C0"></div></div>
<div class="sw" style="left:465px;top:106px"><div style="background:#FF00FF"></div></div>
<div class="sw" style="left:290px;top:128px"><div style="background:#804040"></div></div>
<div class="sw" style="left:315px;top:128px"><div style="background:#FF8040"></div></div>
<div class="sw" style="left:340px;top:128px"><div style="background:#00FF00"></div></div>
<div class="sw" style="left:365px;top:128px"><div style="background:#008080"></div></div>
<div class="sw" style="left:390px;top:128px"><div style="background:#004080"></div></div>
<div class="sw" style="left:415px;top:128px"><div style="background:#8080FF"></div></div>
<div class="sw" style="left:440px;top:128px"><div style="background:#800040"></div></div>
<div class="sw" style="left:465px;top:128px"><div style="background:#FF0080"></div></div>
<div class="sw" style="left:290px;top:150px"><div style="background:#800000"></div></div>
<div class="sw" style="left:315px;top:150px"><div style="background:#FF8000"></div></div>
<div class="sw" style="left:340px;top:150px"><div style="background:#008000"></div></div>
<div class="sw" style="left:365px;top:150px"><div style="background:#008040"></div></div>
<div class="sw" style="left:390px;top:150px"><div style="background:#0000FF"></div></div>
<div class="sw" style="left:415px;top:150px"><div style="background:#0000A0"></div></div>
<div class="sw" style="left:440px;top:150px"><div style="background:#800080"></div></div>
<div class="sw" style="left:465px;top:150px"><div style="background:#8000FF"></div></div>
<div class="sw" style="left:290px;top:172px"><div style="background:#400000"></div></div>
<div class="sw" style="left:315px;top:172px"><div style="background:#804000"></div></div>
<div class="sw" style="left:340px;top:172px"><div style="background:#004000"></div></div>
<div class="sw" style="left:365px;top:172px"><div style="background:#004040"></div></div>
<div class="sw" style="left:390px;top:172px"><div style="background:#000080"></div></div>
<div class="sw" style="left:415px;top:172px"><div style="background:#000040"></div></div>
<div class="sw" style="left:440px;top:172px"><div style="background:#400040"></div></div>
<div class="sw" style="left:465px;top:172px"><div style="background:#400080"></div></div>
<div class="sw" style="left:290px;top:194px"><div style="background:#000000"></div></div>
<div class="sw" style="left:315px;top:194px"><div style="background:#808000"></div></div>
<div class="sw" style="left:340px;top:194px"><div style="background:#808040"></div></div>
<div class="sw" style="left:365px;top:194px"><div style="background:#808080"></div></div>
<div class="sw" style="left:390px;top:194px"><div style="background:#408080"></div></div>
<div class="sw" style="left:415px;top:194px"><div style="background:#C0C0C0"></div></div>
<div class="sw" style="left:440px;top:194px"><div style="background:#400040"></div></div>
<div class="sw" style="left:465px;top:194px"><div style="background:#FFFFFF"></div></div>
<div class="sw" style="left:290px;top:250px"><div style="background:#000"></div></div>
<div class="sw" style="left:315px;top:250px"><div style="background:#000"></div></div>
<div class="sw" style="left:340px;top:250px"><div style="background:#000"></div></div>
<div class="sw" style="left:365px;top:250px"><div style="background:#000"></div></div>
<div class="sw" style="left:390px;top:250px"><div style="background:#000"></div></div>
<div class="sw" style="left:415px;top:250px"><div style="background:#000"></div></div>
<div class="sw" style="left:440px;top:250px"><div style="background:#000"></div></div>
<div class="sw" style="left:465px;top:250px"><div style="background:#000"></div></div>
<div class="sw" style="left:290px;top:272px"><div style="background:#000"></div></div>
<div class="sw" style="left:315px;top:272px"><div style="background:#000"></div></div>
<div class="sw" style="left:340px;top:272px"><div style="background:#000"></div></div>
<div class="sw" style="left:365px;top:272px"><div style="background:#000"></div></div>
<div class="sw" style="left:390px;top:272px"><div style="background:#000"></div></div>
<div class="sw" style="left:415px;top:272px"><div style="background:#000"></div></div>
<div class="sw" style="left:440px;top:272px"><div style="background:#000"></div></div>
<div class="sw" style="left:465px;top:272px"><div style="background:#000"></div></div>
<div class="lbl" style="left:287px;top:231px"><span class="u">C</span>ustom colors:</div>
<div class="btn" style="left:287px;top:302px;width:210px;color:#ACA899;text-shadow:1px 1px #fff"><span class="u">D</span>efine Custom Colors &gt;&gt;</div>
<div class="btn" style="left:287px;top:328px;width:66px;border:1px solid #000">OK</div>
<div class="btn" style="left:359px;top:328px;width:66px">Cancel</div>
<div id="spec"></div>
<div id="lum"></div>
<svg class="abs" style="left:0;top:0" width="739" height="463">
 <path d="M714 165.5 L719 160.5 L719 170.5 Z" fill="#000"/>
 <rect x="569" y="98" width="3" height="5" fill="#000"/>
 <rect x="569" y="112" width="3" height="5" fill="#000"/>
 <rect x="561" y="106" width="5" height="3" fill="#000"/>
 <rect x="575" y="106" width="5" height="3" fill="#000"/>
</svg>
<div id="cur"></div>
<div class="lbl" style="left:514px;top:304px">Color</div>
<div class="lbl" style="left:579px;top:264px">Hu<span class="u">e</span>:</div>
<div class="lbl" style="left:583px;top:286px"><span class="u">S</span>at:</div>
<div class="lbl" style="left:579px;top:309px"><span class="u">L</span>um:</div>
<div class="edit" style="left:605px;top:260px">83</div>
<div class="edit" style="left:605px;top:282px">187</div>
<div class="edit" style="left:605px;top:305px">111</div>
<div class="lbl" style="left:659px;top:264px"><span class="u">R</span>ed:</div>
<div class="lbl" style="left:650px;top:286px"><span class="u">G</span>reen:</div>
<div class="lbl" style="left:658px;top:309px">Bl<span class="u">u</span>e:</div>
<div class="edit" style="left:685px;top:260px">26</div>
<div class="edit" style="left:685px;top:282px">210</div>
<div class="edit" style="left:685px;top:305px">39</div>
<div class="btn" style="left:509px;top:328px;width:214px"><span class="u">A</span>dd to Custom Colors</div>
</body></html>
